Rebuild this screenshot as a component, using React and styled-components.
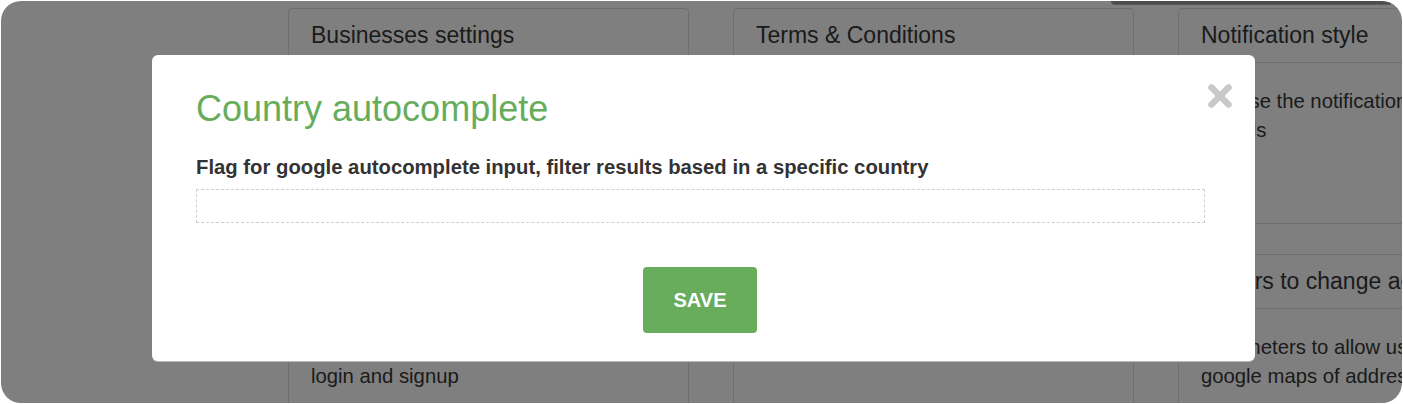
import React from 'react';
import styled, { createGlobalStyle } from 'styled-components';

const GlobalStyle = createGlobalStyle`
  html, body {
    margin: 0;
    padding: 0;
    background: #fff;
  }

  body {
    font-family: "Liberation Sans", Arial, Helvetica, sans-serif;
  }
`;

const columns = [
  [
    {
      title: 'Businesses settings',
      top: 270,
      lines: ['Allow new businesses to register from the', 'login and signup'],
    },
  ],
  [
    {
      title: 'Terms & Conditions',
      top: 270,
      lines: ['Use plain text or html'],
    },
  ],
  [
    {
      title: 'Notification style',
      lines: ['Choose the notification style for the', 'modals'],
      height: 216,
    },
    {
      title: 'Drivers to change address',
      lines: ['Parameters to allow users change the', 'google maps of address'],
    },
  ],
];

const CloseIcon = () => (
  <svg width="28" height="28" viewBox="0 0 28 28">
    <path
      d="M5.5 5.5 L22.5 22.5 M22.5 5.5 L5.5 22.5"
      stroke="#c9c9c9"
      strokeWidth="6.5"
      strokeLinecap="round"
      fill="none"
    />
  </svg>
);

const App = () => {
  const renderCard = (card) => (
    <Card key={card.title} $height={card.height}>
      <CardHeader>{card.title}</CardHeader>
      <CardBody $top={card.top}>
        {card.lines.map((line) => (
          <Line key={line}>{line}</Line>
        ))}
      </CardBody>
    </Card>
  );

  return <>
    <GlobalStyle />
    <Screen>
      <Page>
        <TopStrip>
          <MenuEdge />
        </TopStrip>
        <Columns>
          {columns.map((cards, i) => (
            <Column key={i}>{cards.map(renderCard)}</Column>
          ))}
        </Columns>
      </Page>

      <Overlay>
        <Modal>
          <CloseButton aria-label="Close">
            <CloseIcon />
          </CloseButton>
          <Title>Country autocomplete</Title>
          <Label>Flag for google autocomplete input, filter results based in a specific country</Label>
          <Input type="text" />
          <Footer>
            <SaveButton>SAVE</SaveButton>
          </Footer>
        </Modal>
      </Overlay>
    </Screen>
  </>;
};

export default App;

const Screen = styled.div`
  position: relative;
  width: 1401px;
  height: 402px;
  margin: 1px;
  border-radius: 20px;
  overflow: hidden;
  background: #fff;
`;

const Page = styled.div`
  display: flex;
  flex-direction: column;
  height: 100%;
`;

const TopStrip = styled.div`
  display: flex;
  height: 4px;
  padding-left: 1110px;
`;

const MenuEdge = styled.div`
  width: 280px;
  height: 3px;
  background: #9a9a9a;
  border-bottom: 1px dotted #c8c8c8;
  border-bottom-left-radius: 4px;
`;

const Columns = styled.div`
  display: grid;
  grid-template-columns: repeat(3, 401px);
  column-gap: 44px;
  margin-top: 3px;
  padding-left: 287px;
`;

const Column = styled.div`
  display: flex;
  flex-direction: column;
  gap: 30px;
`;

const Card = styled.div`
  display: flex;
  flex-direction: column;
  height: ${(p) => (p.$height ? `${p.$height}px` : 'auto')};
  min-height: ${(p) => (p.$height ? 'auto' : '420px')};
  background: #fff;
  border: 1px solid #dcdcdc;
  border-radius: 4px;
  box-sizing: border-box;
`;

const CardHeader = styled.div`
  display: flex;
  align-items: center;
  height: 54px;
  padding: 0 22px 1px;
  border-bottom: 1px solid #dcdcdc;
  box-sizing: border-box;

  color: #363636;
  font-size: 23px;
  white-space: nowrap;
`;

const CardBody = styled.div`
  display: flex;
  flex-direction: column;
  padding: ${(p) => p.$top || 24}px 22px 24px;
`;

const Line = styled.div`
  color: #363636;
  font-size: 20.3px;
  line-height: 29px;
  white-space: nowrap;
`;

const Overlay = styled.div`
  position: absolute;
  inset: 0;
  display: flex;
  align-items: flex-start;
  padding: 54px 0 0 151px;
  background: rgba(0, 0, 0, 0.5);
`;

const Modal = styled.div`
  position: relative;
  display: flex;
  flex-direction: column;
  width: 1103px;
  box-sizing: border-box;
  padding: 34px 50px 28px 44px;

  background: #fff;
  border-radius: 6px;
  box-shadow: 0 1px 0 #b8b8b8;
`;

const CloseButton = styled.button`
  position: absolute;
  top: 27px;
  right: 21px;
  display: flex;
  padding: 0;
  border: 0;
  background: none;
  cursor: pointer;
`;

const Title = styled.h2`
  margin: 0;
  color: #66ad5b;
  font-size: 36px;
  font-weight: normal;
  line-height: 40px;
`;

const Label = styled.label`
  margin-top: 25px;
  color: #333;
  font-size: 20.3px;
  font-weight: bold;
  line-height: 26px;
`;

const Input = styled.input`
  height: 34px;
  margin-top: 9px;
  padding: 0 10px;
  box-sizing: border-box;
  border: 1px dashed #cfcfcf;
  outline: none;
  font-family: inherit;
  font-size: 18px;
`;

const Footer = styled.div`
  display: flex;
  justify-content: center;
  margin-top: 44px;
  padding-right: 1px;
`;

const SaveButton = styled.button`
  flex: 0 0 auto;
  width: 114px;
  height: 66px;
  padding: 0;
  border: 0;
  border-radius: 4px;
  background: #67ad5c;

  color: #fff;
  font-family: inherit;
  font-size: 20px;
  font-weight: bold;
  cursor: pointer;
`;
